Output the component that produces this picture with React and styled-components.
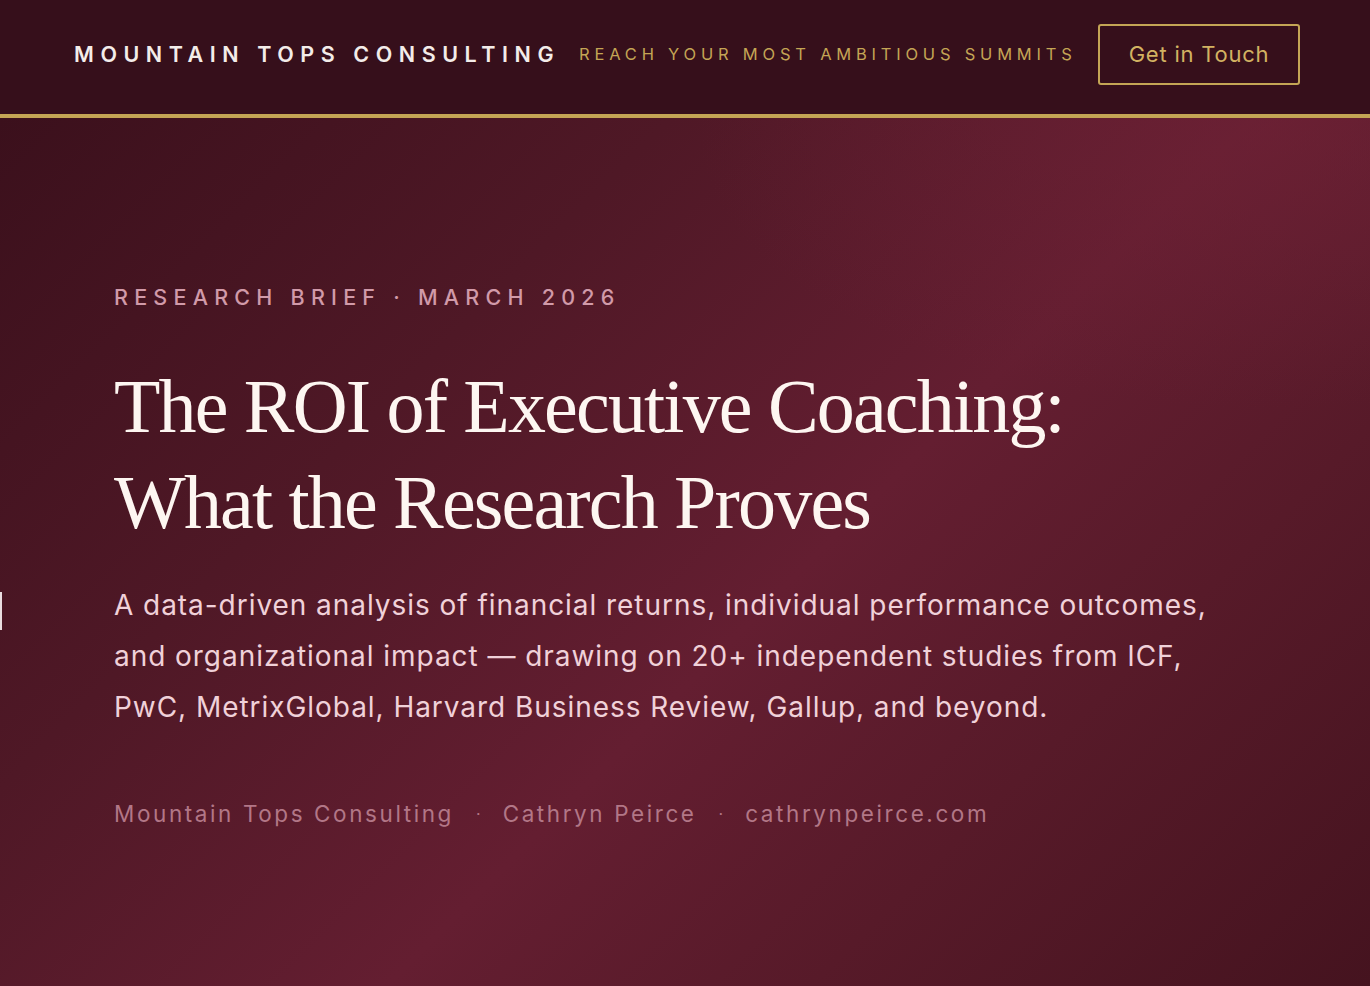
import React from "react";
import styled, { createGlobalStyle } from "styled-components";

const GlobalStyle = createGlobalStyle`
  html, body {
    margin: 0;
    padding: 0;
    background: #360f1b;
  }
  * { box-sizing: border-box; }
`;

const Page = styled.div`
  position: relative;
  min-height: 986px;
  display: flex;
  flex-direction: column;
  font-family: Inter, "Liberation Sans", sans-serif;
  overflow: hidden;
`;

const Header = styled.header`
  height: 118px;
  background: #360f1b;
  border-bottom: 4px solid #c4a555;
  display: flex;
  align-items: center;
  padding: 0 70px 6px 74px;
`;

const Brand = styled.div`
  color: #f3ece9;
  font-size: 21.5px;
  font-weight: 600;
  letter-spacing: 0.305em;
  white-space: nowrap;
`;

const Tagline = styled.div`
  color: #c4a555;
  font-size: 16.5px;
  font-weight: 400;
  letter-spacing: 0.29em;
  margin-left: 19px;
  white-space: nowrap;
`;

const CtaButton = styled.button`
  margin-left: auto;
  width: 202px;
  height: 61px;
  background: transparent;
  border: 2px solid #c4a555;
  border-radius: 3px;
  color: #d2b262;
  font-family: Inter, "Liberation Sans", sans-serif;
  font-size: 22px;
  letter-spacing: 0.035em;
  cursor: pointer;
`;

const Hero = styled.section`
  flex: 1;
  padding: 165px 70px 0 114px;
  background:
    radial-gradient(ellipse 60% 45% at 93% 2%, rgba(112, 34, 54, 0.55), transparent 70%),
    linear-gradient(135deg, #3b101c 0%, #4f1826 30%, #641e31 56%, #571a29 75%, #45131f 100%);
`;

const Eyebrow = styled.div`
  color: #d19aa9;
  font-size: 21.5px;
  font-weight: 500;
  letter-spacing: 0.29em;
  line-height: 28px;
`;

const Title = styled.h1`
  margin: 47px 0 0;
  color: #fdf6f1;
  font-family: "Liberation Serif", "Times New Roman", serif;
  font-weight: 400;
  font-size: 76px;
  line-height: 96px;
  letter-spacing: -0.024em;
`;

const Lede = styled.p`
  margin: 30px 0 0;
  max-width: 1120px;
  color: #f0d1d9;
  font-size: 28px;
  line-height: 51px;
  letter-spacing: 0.034em;
  font-weight: 400;
`;

const Byline = styled.div`
  margin-top: 67px;
  display: flex;
  align-items: center;
  gap: 22px;
  color: #b27787;
  font-size: 22.5px;
  letter-spacing: 0.115em;
`;

const Dot = styled.span`
  font-size: 16px;
  letter-spacing: 0;
`;

const EdgeMark = styled.div`
  position: absolute;
  left: 0;
  top: 592px;
  width: 2px;
  height: 38px;
  background: #e9dde0;
`;

export default function App() {
  return (
    <Page>
      <GlobalStyle />
      <Header>
        <Brand>MOUNTAIN TOPS CONSULTING</Brand>
        <Tagline>REACH YOUR MOST AMBITIOUS SUMMITS</Tagline>
        <CtaButton>Get in Touch</CtaButton>
      </Header>
      <Hero>
        <Eyebrow>RESEARCH BRIEF · MARCH 2026</Eyebrow>
        <Title>
          The ROI of Executive Coaching:
          <br />
          What the Research Proves
        </Title>
        <Lede>
          A data-driven analysis of financial returns, individual performance outcomes,
          and organizational impact — drawing on 20+ independent studies from ICF,
          PwC, MetrixGlobal, Harvard Business Review, Gallup, and beyond.
        </Lede>
        <Byline>
          <span>Mountain Tops Consulting</span>
          <Dot>·</Dot>
          <span>Cathryn Peirce</span>
          <Dot>·</Dot>
          <span>cathrynpeirce.com</span>
        </Byline>
      </Hero>
      <EdgeMark />
    </Page>
  );
}
